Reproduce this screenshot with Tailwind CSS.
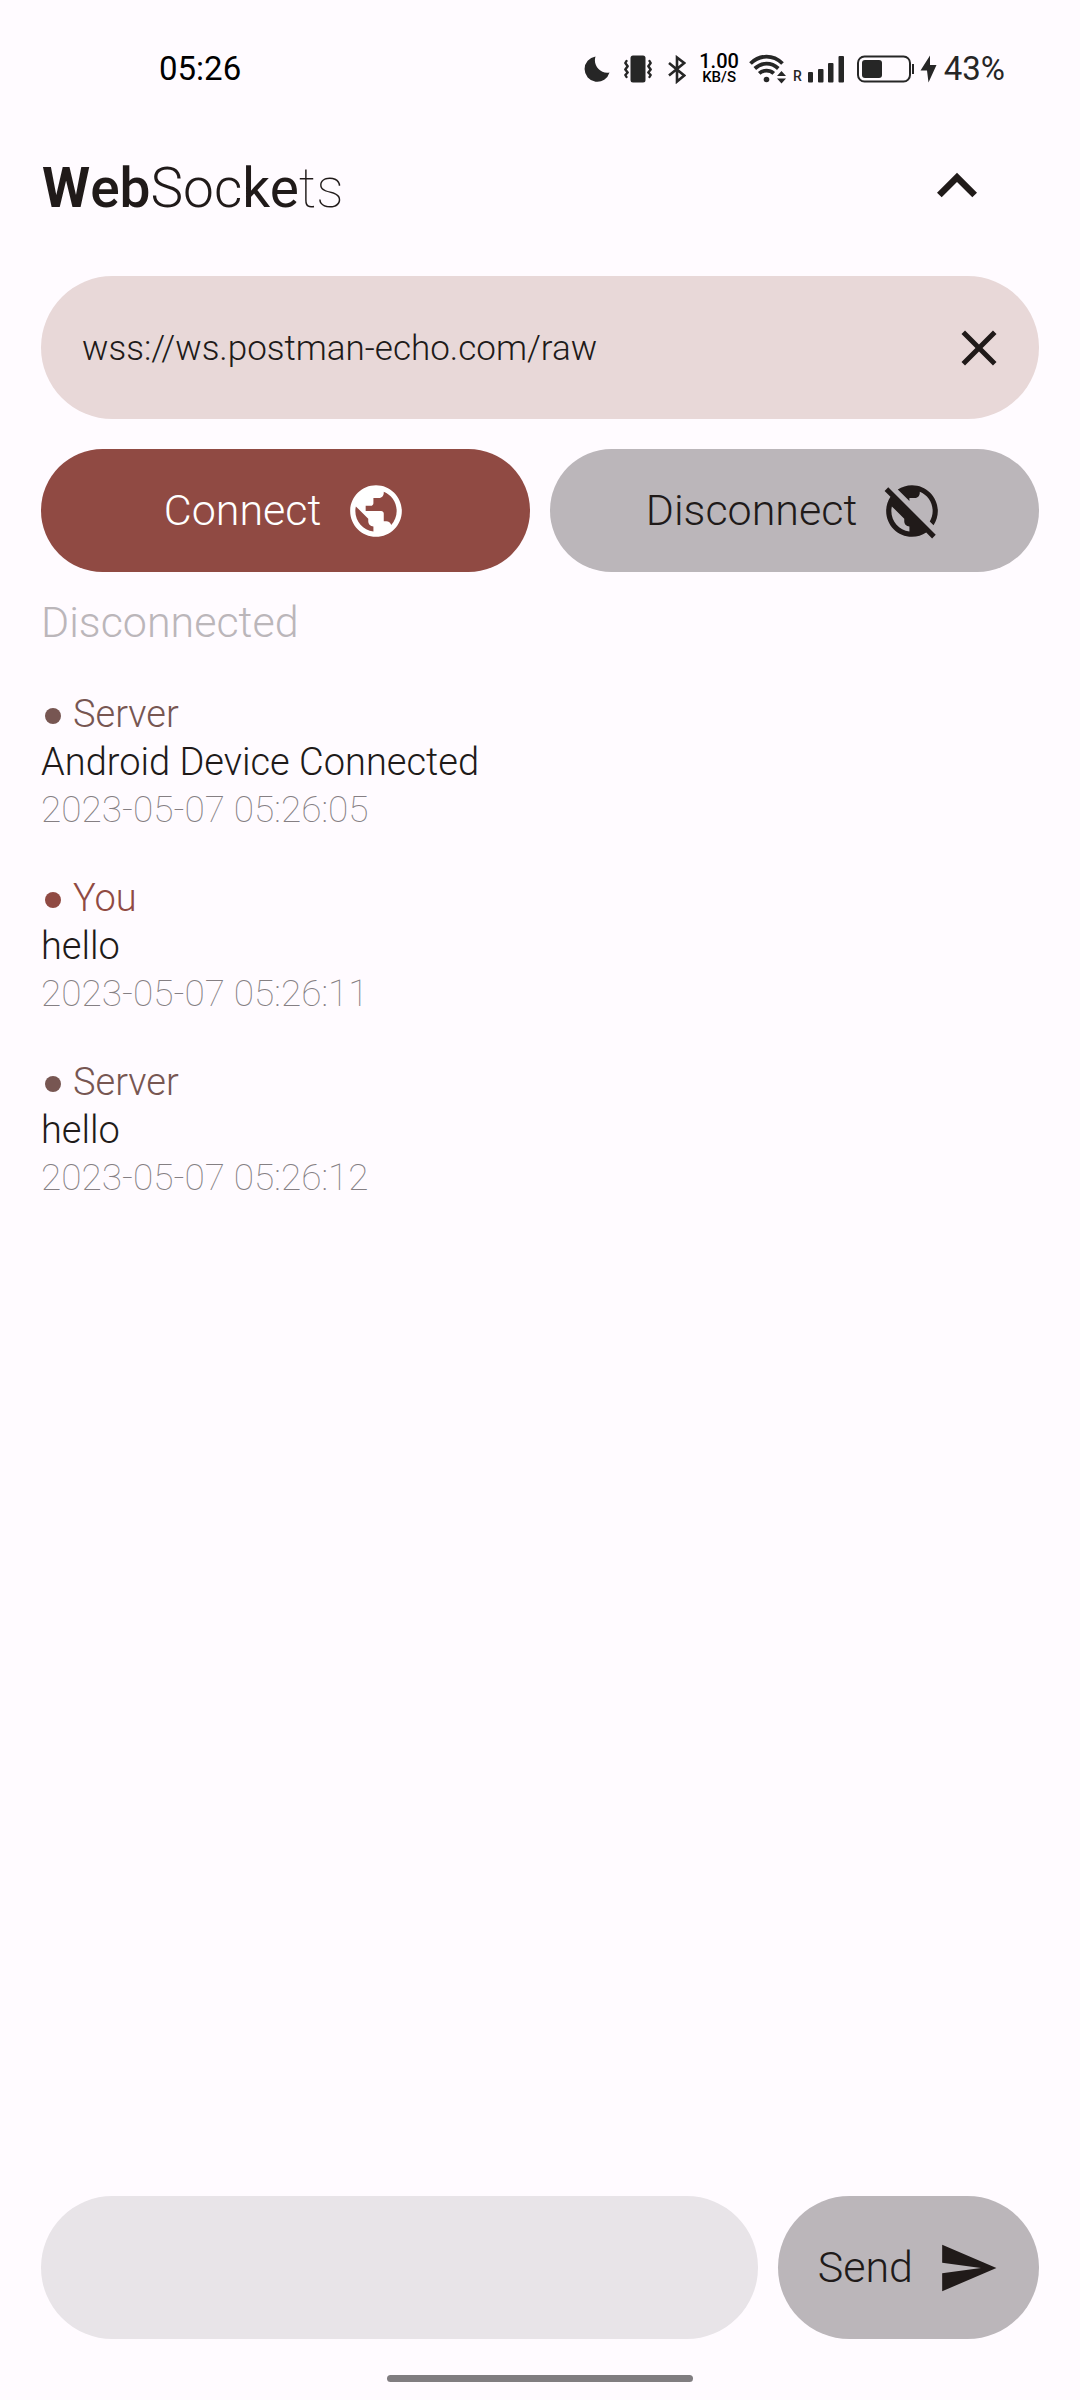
<!DOCTYPE html>
<html lang="en">
<head>
<meta charset="utf-8">
<meta name="viewport" content="width=device-width, initial-scale=1">
<title>WebSockets</title>
<script src="https://cdn.jsdelivr.net/npm/@tailwindcss/browser@4"></script>
</head>
<body class="flex min-h-screen flex-col bg-[#fffbff] font-['Roboto',sans-serif] text-[#201a19]">

<!-- Status bar -->
<div class="flex h-[138px] items-center justify-between pr-[75px] pl-[159px] text-[#262626]">
  <time class="text-[33px] text-black">05:26</time>
  <div class="flex items-center">
    <svg class="mr-[14px] h-[26px] w-[26px]" viewBox="0 0 26 26" fill="currentColor"><path d="M11.500 .5A12.700 12.700 0 1 0 25.500 16.500C17 18.500 8.500 9.500 11.500 .5z"/></svg>
    <svg class="mr-4 h-7 w-7" viewBox="0 0 28 28" fill="none" stroke="currentColor" stroke-width="2.400" stroke-linejoin="round" stroke-linecap="round"><rect x="6.500" y="0.500" width="15" height="27" rx="2.500" fill="currentColor" stroke="none"/><path d="M2.500 6L1.300 8l2.400 3.200L1.300 14.500 3.700 17.500 1.300 20l1.200 2M25.500 6L26.700 8l-2.400 3.200 2.400 3.300-2.400 3 2.400 2.500-1.200 2"/></svg>
    <svg class="mr-[13px] h-[29px] w-[18px]" viewBox="0 0 18 29" fill="none" stroke="currentColor" stroke-width="2.600"><path d="M1 8l15.200 12.500L9 26.500v-24l7.200 5.500L1 20.500"/></svg>
    <div class="mr-[10px] flex flex-col items-center font-medium text-black">
      <span class="text-[20px] leading-4">1.00</span>
      <span class="text-[15px] leading-4">KB/S</span>
    </div>
    <svg class="mr-[6px] h-[30px] w-[38px]" viewBox="0 0 38 30" fill="none" stroke="currentColor" stroke-width="3.800"><path d="M1.500 9.500C11 .3 24 .3 33.500 9.500M5.800 14.500c7-6.400 16.500-6.400 23.500 0M10.200 19.400c4.300-3.800 10.300-3.800 14.600 0"/><circle cx="17.500" cy="25.500" r="2.800" fill="currentColor" stroke="none"/><path d="M32.500 17l4.500 5h-9zM32.500 29.500L28 24.500h9z" fill="currentColor" stroke="none"/></svg>
    <span class="mt-[14px] mr-[6px] text-[14px] leading-4 font-medium">R</span>
    <svg class="mr-[13px] h-[27px] w-9" viewBox="0 0 36 27" fill="currentColor"><rect y="16" width="5" height="10.500" rx="1"/><rect x="10" y="13" width="5.500" height="13.500" rx="1"/><rect x="20" y="7" width="5.500" height="19.500" rx="1"/><rect x="30.500" width="5.500" height="26.500" rx="1"/></svg>
    <svg class="mr-[6px] h-7 w-[57px]" viewBox="0 0 57 28" fill="none" stroke="currentColor" stroke-width="2"><rect x="1" y="1.500" width="52" height="25" rx="6.500"/><rect x="5" y="5" width="20" height="18" rx="3" fill="currentColor" stroke="none"/><path d="M56 9v10"/></svg>
    <svg class="mr-[7px] h-7 w-[17px]" viewBox="0 0 17 28" fill="currentColor"><path d="M10 .5L.5 15.500H7L8.500 27.500 16.500 10H10z"/></svg>
    <span class="text-[33px]">43%</span>
  </div>
</div>

<!-- Title -->
<header class="flex h-24 items-center justify-between pr-[83px] pl-[42px]">
  <h1 class="pt-1 text-[55px] leading-none"><span class="font-bold">W</span><span class="font-medium">eb</span><span class="font-light">Soc</span><span class="font-normal">ke</span><span class="font-thin">ts</span></h1>
  <button type="button" aria-label="Collapse connection panel"><svg class="h-20 w-20" viewBox="0 0 24 24" fill="currentColor"><path d="M12 8l-6 6 1.410 1.410L12 10.830l4.590 4.580L18 14z"/></svg></button>
</header>

<main class="flex flex-1 flex-col px-[41px] pt-[42px]">
  <div class="flex h-[143px] items-center rounded-full bg-[#e8d8d8] pr-[30px] pl-[41px]">
    <input type="url" aria-label="Server address" value="wss://ws.postman-echo.com/raw" class="min-w-0 flex-1 bg-transparent pt-1 text-[35px] font-light outline-none">
    <button type="button" aria-label="Clear address"><svg class="h-15 w-15" viewBox="0 0 24 24" fill="currentColor"><path d="M19 6.410L17.590 5 12 10.590 6.410 5 5 6.410 10.590 12 5 17.590 6.410 19 12 13.410 17.590 19 19 17.590 13.410 12z"/></svg></button>
  </div>

  <div class="mt-[30px] grid grid-cols-2 gap-5 text-[43px] font-light">
    <button type="button" class="flex h-[123px] items-center justify-center gap-6 rounded-full bg-[#904a43] text-white">Connect
      <svg class="h-[62px] w-[62px]" viewBox="0 0 24 24" fill="currentColor"><path d="M12 2C6.480 2 2 6.480 2 12s4.480 10 10 10 10-4.480 10-10S17.520 2 12 2zm-1 17.930c-3.950-.490-7-3.850-7-7.930 0-.620.080-1.210.210-1.790L9 15v1c0 1.100.900 2 2 2v1.930zm6.900-2.540c-.260-.810-1-1.390-1.900-1.390h-1v-3c0-.550-.450-1-1-1H8v-2h2c.550 0 1-.450 1-1V7h2c1.100 0 2-.900 2-2v-.410c2.930 1.190 5 4.060 5 7.410 0 2.080-.800 3.970-2.100 5.390z"/></svg>
    </button>
    <button type="button" class="flex h-[123px] items-center justify-center gap-6 rounded-full bg-[#bbb6ba]">Disconnect
      <svg class="h-[62px] w-[62px]" viewBox="0 0 24 24" fill="currentColor"><path d="M11 8.170L6.490 3.660C8.070 2.610 9.960 2 12 2c5.520 0 10 4.480 10 10 0 2.040-.610 3.930-1.660 5.510l-1.460-1.460C19.590 14.870 20 13.480 20 12c0-3.350-2.070-6.220-5-7.410V5c0 1.100-.900 2-2 2h-2v1.170zm10.190 13.020l-1.410 1.410-2.270-2.270C15.930 21.390 14.040 22 12 22 6.480 22 2 17.520 2 12c0-2.040.610-3.930 1.660-5.510L1.390 4.220 2.800 2.810l18.390 18.380zM11 18c-1.100 0-2-.900-2-2v-1l-4.790-4.790C4.080 10.790 4 11.380 4 12c0 4.080 3.050 7.440 7 7.930V18z"/></svg>
    </button>
  </div>

  <p class="mt-[22px] text-[43px] leading-[56px] font-light text-[#bbb6ba]">Disconnected</p>

  <ul class="mt-10 flex flex-col gap-10 text-[38px] leading-12 font-light">
    <li>
      <div class="flex items-center gap-3 pl-1 text-[#775652]"><span class="mt-1 size-4 rounded-full bg-current"></span>Server</div>
      <p>Android Device Connected</p>
      <time class="block text-[37px] font-thin text-[#857f83]">2023-05-07 05:26:05</time>
    </li>
    <li>
      <div class="flex items-center gap-3 pl-1 text-[#904a43]"><span class="mt-1 size-4 rounded-full bg-current"></span>You</div>
      <p>hello</p>
      <time class="block text-[37px] font-thin text-[#857f83]">2023-05-07 05:26:11</time>
    </li>
    <li>
      <div class="flex items-center gap-3 pl-1 text-[#775652]"><span class="mt-1 size-4 rounded-full bg-current"></span>Server</div>
      <p>hello</p>
      <time class="block text-[37px] font-thin text-[#857f83]">2023-05-07 05:26:12</time>
    </li>
  </ul>
</main>

<!-- Composer -->
<form class="flex gap-5 px-[41px]">
  <input type="text" aria-label="Message" class="h-[143px] min-w-0 flex-1 rounded-full bg-[#e8e4e8] px-[41px] text-[35px] font-light outline-none">
  <button type="button" class="flex h-[143px] items-center gap-6 rounded-full bg-[#bbb6ba] px-10 text-[43px] font-light">Send
    <svg class="h-[62px] w-[62px]" viewBox="0 0 24 24" fill="currentColor"><path d="M2.010 21L23 12 2.010 3 2 10l15 2-15 2z"/></svg>
  </button>
</form>

<!-- Gesture handle -->
<div class="flex justify-center pt-9 pb-[18px]"><div class="h-[7px] w-[306px] rounded-full bg-[#807d80]"></div></div>
</body>
</html>
